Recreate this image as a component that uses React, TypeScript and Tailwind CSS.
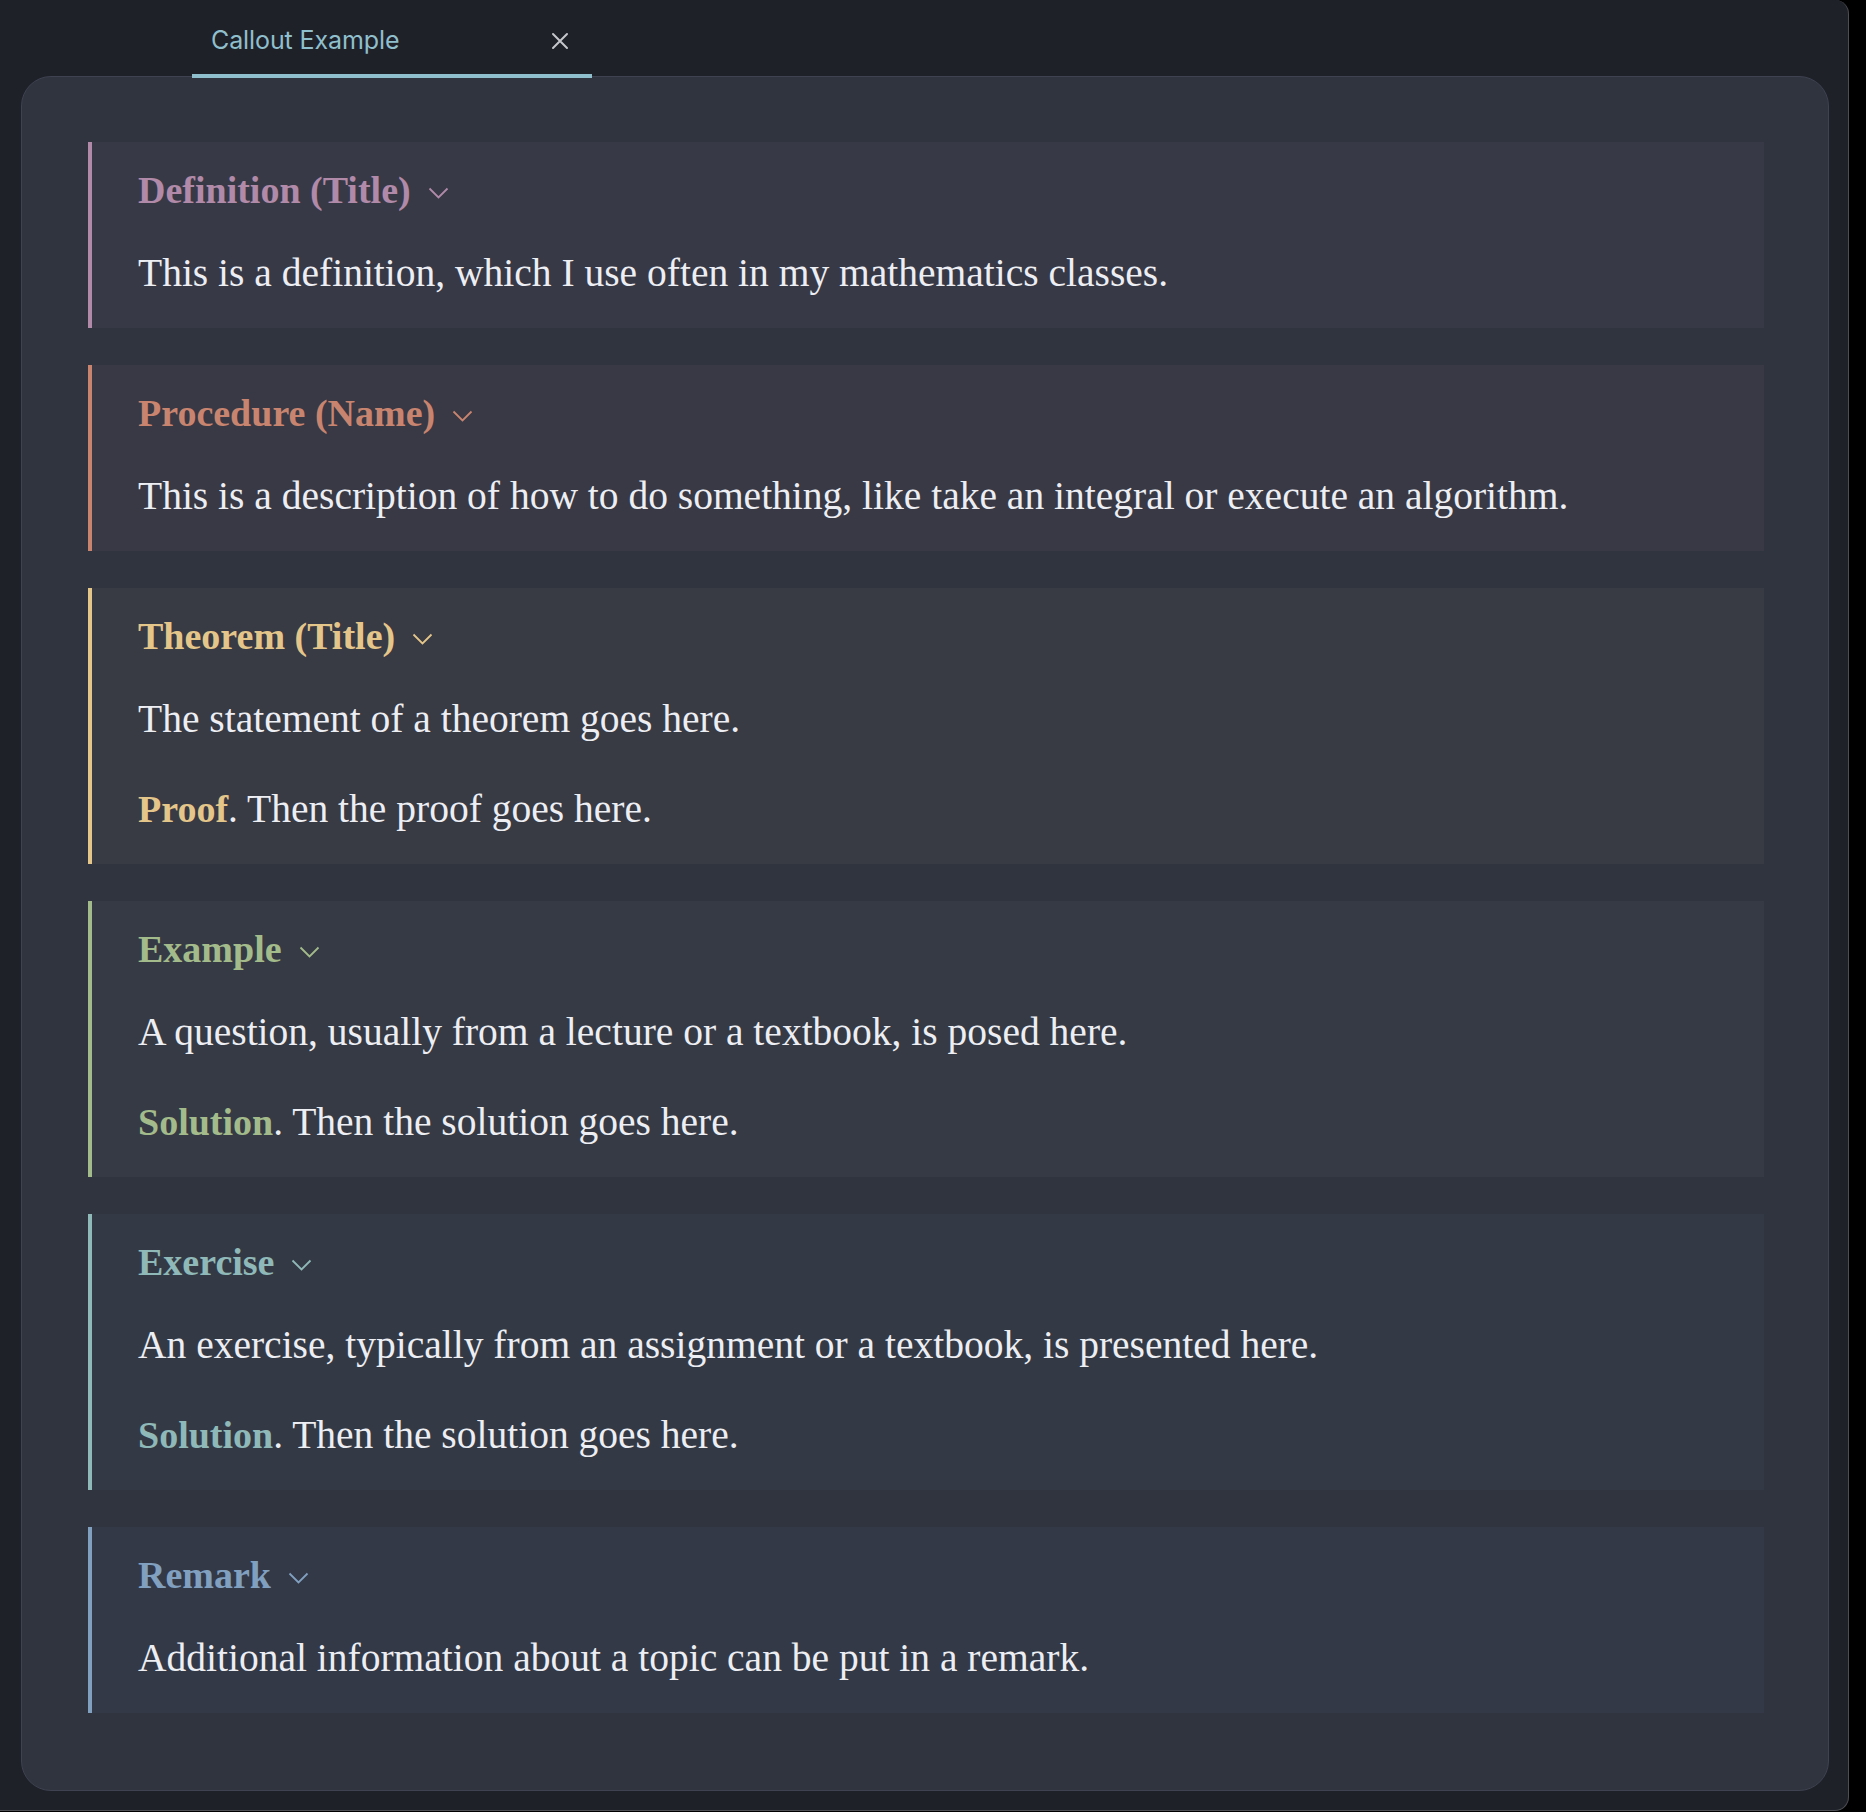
type Callout = {
  title: string;
  color: string;
  body: string;
  follow?: { label: string; text: string };
};

const callouts: Callout[] = [
  {
    title: 'Definition (Title)',
    color: 'purple',
    body: 'This is a definition, which I use often in my mathematics classes.',
  },
  {
    title: 'Procedure (Name)',
    color: 'orange',
    body: 'This is a description of how to do something, like take an integral or execute an algorithm.',
  },
  {
    title: 'Theorem (Title)',
    color: 'yellow',
    body: 'The statement of a theorem goes here.',
    follow: { label: 'Proof', text: '. Then the proof goes here.' },
  },
  {
    title: 'Example',
    color: 'green',
    body: 'A question, usually from a lecture or a textbook, is posed here.',
    follow: { label: 'Solution', text: '. Then the solution goes here.' },
  },
  {
    title: 'Exercise',
    color: 'teal',
    body: 'An exercise, typically from an assignment or a textbook, is presented here.',
    follow: { label: 'Solution', text: '. Then the solution goes here.' },
  },
  {
    title: 'Remark',
    color: 'blue',
    body: 'Additional information about a topic can be put in a remark.',
  },
];

const styles: Record<string, { box: string; text: string }> = {
  purple: { box: 'bg-[#383946] border-[#b08aa8]', text: 'text-[#b08aa8]' },
  orange: { box: 'bg-[#383944] border-[#c8846f]', text: 'text-[#c8846f]' },
  yellow: { box: 'bg-[#383a44] border-[#e5c68a]', text: 'text-[#e5c68a]' },
  green: { box: 'bg-[#363a44] border-[#a3bb8b]', text: 'text-[#a3bb8b]' },
  teal: { box: 'bg-[#343a45] border-[#8fb8b8]', text: 'text-[#8fb8b8]' },
  blue: { box: 'bg-[#333947] border-[#81a0c0]', text: 'text-[#81a0c0]' },
};

function Chevron() {
  return (
    <svg width="21" height="12" viewBox="0 0 21 12" fill="none" className="ml-[17px] mt-[6px]">
      <path d="M1.5 1.5 L10.5 10.5 L19.5 1.5" stroke="currentColor" strokeWidth="1.8" />
    </svg>
  );
}

function CalloutBox({ c }: { c: Callout }) {
  const s = styles[c.color];
  return (
    <div className={`border-l-4 pl-[46px] pr-10 pt-[21px] pb-[28px] ${s.box}`}>
      <div className={`flex items-center font-bold text-[38px] h-[54px] ${s.text}`}>
        <span>{c.title}</span>
        <Chevron />
      </div>
      <p className="mt-[29px] text-[#eceef3]">{c.body}</p>
      {c.follow && (
        <p className="mt-[36px] text-[#eceef3]">
          <span className={`font-bold text-[38px] ${s.text}`}>{c.follow.label}</span>
          {c.follow.text}
        </p>
      )}
    </div>
  );
}

export default function App() {
  return (
    <div className="w-[1866px] h-[1812px] bg-black">
      <div className="w-[1849px] h-[1811px] bg-[#1f2129] border-r border-b border-[#4d4e54] rounded-tr-[14px] rounded-br-[14px] flex flex-col">
        <div className="h-[78px] flex">
          <div className="relative z-10 ml-[192px] w-[400px] h-full border-b-4 border-[#8fbfcc] flex items-center pl-[19px] pt-[8px]">
            <span className="text-[25px] text-[#8fbfcc] font-['Inter',sans-serif] tracking-[-0.1px]">
              Callout Example
            </span>
            <svg width="18" height="18" viewBox="0 0 18 18" className="ml-auto mr-[23px]">
              <path d="M2 2 L16 16 M16 2 L2 16" stroke="#c4c6cc" strokeWidth="2" strokeLinecap="round" />
            </svg>
          </div>
        </div>
        <div className="-mt-[2px] ml-[21px] w-[1808px] rounded-[30px] border border-[#3e4251] bg-[#30343f] pt-[65px] pl-[66px] pr-[64px] pb-[77px]">
          <div className="flex flex-col gap-[37px] font-['Liberation_Serif',serif] text-[39.5px] leading-[54px]">
            {callouts.map((c) => (
              <CalloutBox key={c.title} c={c} />
            ))}
          </div>
        </div>
      </div>
    </div>
  );
}
